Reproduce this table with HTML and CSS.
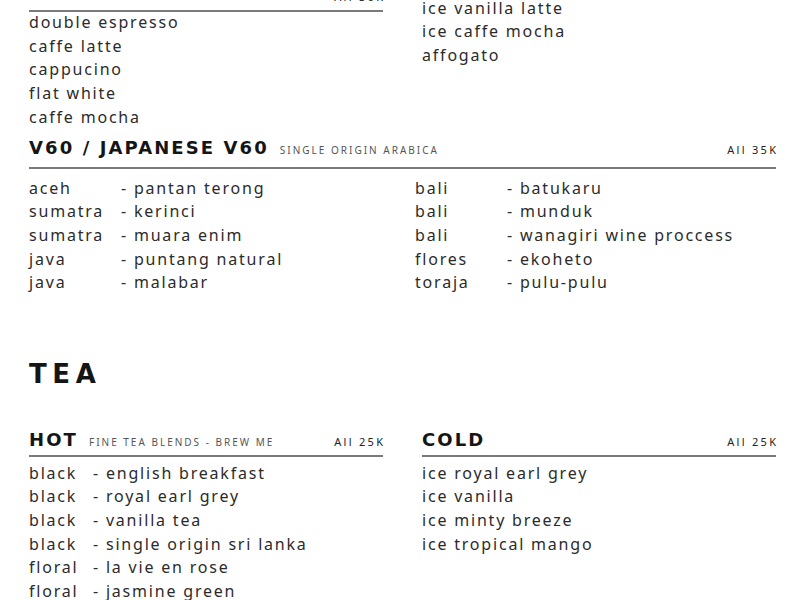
FILE: index.html
```html
<!DOCTYPE html>
<html>
<head>
<meta charset="utf-8">
<link rel="stylesheet" href="styles.css">
</head>
<body>
<div class="page">
  <div class="two-col top">
    <div class="col">
      <div class="head head-top">
        <span class="price">All 30K</span>
      </div>
      <ul class="list list-top">
        <li>double espresso</li>
        <li>caffe latte</li>
        <li>cappucino</li>
        <li>flat white</li>
        <li>caffe mocha</li>
      </ul>
    </div>
    <div class="col">
      <ul class="list list-right-top">
        <li>ice vanilla latte</li>
        <li>ice caffe mocha</li>
        <li>affogato</li>
      </ul>
    </div>
  </div>

  <div class="section v60">
    <div class="head">
      <h3 class="title">V60 / JAPANESE V60</h3>
      <span class="sub">SINGLE ORIGIN ARABICA</span>
      <span class="price">All 35K</span>
    </div>
    <div class="v60-grid">
      <ul class="list pairs pairs-wide">
        <li><span class="origin">aceh</span><span>- pantan terong</span></li>
        <li><span class="origin">sumatra</span><span>- kerinci</span></li>
        <li><span class="origin">sumatra</span><span>- muara enim</span></li>
        <li><span class="origin">java</span><span>- puntang natural</span></li>
        <li><span class="origin">java</span><span>- malabar</span></li>
      </ul>
      <ul class="list pairs pairs-wide">
        <li><span class="origin">bali</span><span>- batukaru</span></li>
        <li><span class="origin">bali</span><span>- munduk</span></li>
        <li><span class="origin">bali</span><span>- wanagiri wine proccess</span></li>
        <li><span class="origin">flores</span><span>- ekoheto</span></li>
        <li><span class="origin">toraja</span><span>- pulu-pulu</span></li>
      </ul>
    </div>
  </div>

  <h2 class="category">TEA</h2>

  <div class="two-col tea">
    <div class="col">
      <div class="head">
        <h3 class="title">HOT</h3>
        <span class="sub">FINE TEA BLENDS - BREW ME</span>
        <span class="price">All 25K</span>
      </div>
      <ul class="list pairs pairs-narrow tea-list">
        <li><span class="origin">black</span><span>- english breakfast</span></li>
        <li><span class="origin">black</span><span>- royal earl grey</span></li>
        <li><span class="origin">black</span><span>- vanilla tea</span></li>
        <li><span class="origin">black</span><span>- single origin sri lanka</span></li>
        <li><span class="origin">floral</span><span>- la vie en rose</span></li>
        <li><span class="origin">floral</span><span>- jasmine green</span></li>
      </ul>
    </div>
    <div class="col">
      <div class="head">
        <h3 class="title">COLD</h3>
        <span class="price">All 25K</span>
      </div>
      <ul class="list tea-list">
        <li>ice royal earl grey</li>
        <li>ice vanilla</li>
        <li>ice minty breeze</li>
        <li>ice tropical mango</li>
      </ul>
    </div>
  </div>
</div>
</body>
</html>
```

FILE: styles.css
```css
html, body {
  margin: 0;
  padding: 0;
  background: #ffffff;
  overflow: hidden;
}

body {
  font-family: "Noto Sans", "Open Sans", sans-serif;
  color: #2b2b2b;
}

.page {
  width: 747px;
  margin: -10px 0 0 29px;
}

.two-col {
  display: grid;
  grid-template-columns: 354px 354px;
  column-gap: 39px;
  align-items: start;
}

.list {
  list-style: none;
  margin: 0;
  padding: 0;
  font-size: 16px;
  line-height: 23.7px;
  letter-spacing: 1.8px;
  color: #2b2b2b;
}

.head {
  display: flex;
  align-items: baseline;
  border-bottom: 2px solid #7a7a7a;
  padding-bottom: 7.5px;
}

.head-top {
  justify-content: flex-end;
  height: 14px;
  padding-bottom: 6px;
  line-height: 14px;
}

.title {
  margin: 0;
  font-family: "DejaVu Sans", "Noto Sans", sans-serif;
  font-size: 18px;
  line-height: 22px;
  font-weight: 700;
  letter-spacing: 2.1px;
  color: #151515;
}

.sub {
  margin-left: 11px;
  font-size: 10px;
  letter-spacing: 2px;
  color: #555;
}

.price {
  margin-left: auto;
  font-size: 11px;
  letter-spacing: 2.3px;
  margin-right: -2.3px;
  color: #222;
}

.list-top {
  margin-top: -1px;
}

.list-right-top {
  margin-top: 6.6px;
}

.v60 {
  margin-top: 7.5px;
}

.v60-grid {
  display: grid;
  grid-template-columns: 386px 1fr;
  padding-top: 8px;
}

.pairs li {
  display: flex;
}

.pairs-wide .origin {
  width: 92px;
  flex: none;
}

.pairs-narrow .origin {
  width: 64px;
  flex: none;
}

.category {
  margin: 63px 0 0 0;
  font-family: "DejaVu Sans", "Noto Sans", sans-serif;
  font-size: 26px;
  line-height: 32px;
  font-weight: 700;
  letter-spacing: 5.6px;
  color: #151515;
}

.tea {
  margin-top: 38.5px;
}

.tea .head {
  padding-bottom: 4px;
}

.tea-list {
  padding-top: 5px;
}
```
